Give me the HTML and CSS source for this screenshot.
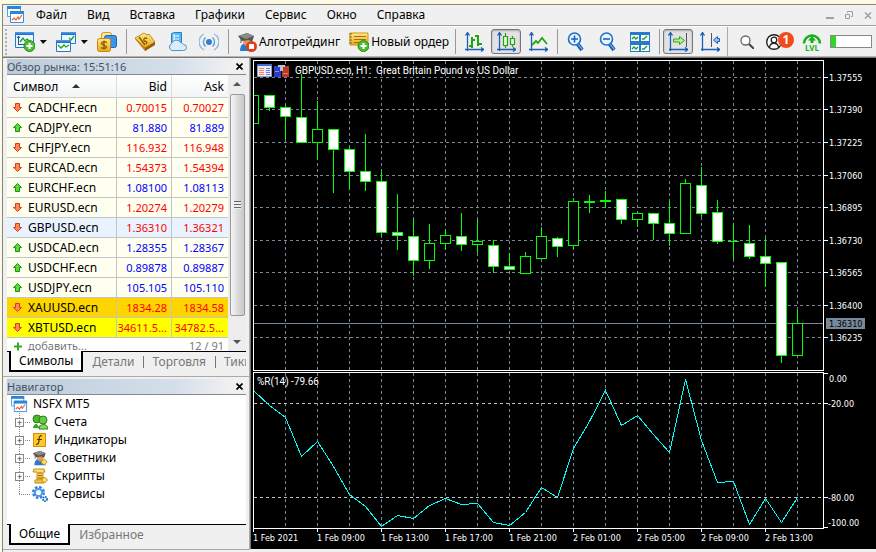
FILE: index.html
```html
<!DOCTYPE html>
<html lang="ru">
<head>
<meta charset="utf-8">
<title>NSFX MT5</title>
<link rel="stylesheet" href="styles.css">
</head>
<body>
<svg class="defs" aria-hidden="true">
  <defs>
    <linearGradient id="gold" x1="0" y1="0" x2="0" y2="1"><stop offset="0" stop-color="#ffe98a"/><stop offset="1" stop-color="#e9a912"/></linearGradient>
    <linearGradient id="head" x1="0" y1="0" x2="0" y2="1"><stop offset="0" stop-color="#4da3f0"/><stop offset="1" stop-color="#1c66c4"/></linearGradient>
    <symbol id="logo" viewBox="0 0 18 18"><path d="M.5.5h13v10H.5z" fill="#fff" stroke="#56a2e0"/><path d="M0 0h14v3H0z" fill="#2a86dd"/><path d="M3.500 5.500h13v11h-13z" fill="#fff" stroke="#3b8ee0"/><path d="M3 5h14v3H3z" fill="#2a86dd"/><path d="M5 14l2-2 2 2 2-3 1 2 3-4" fill="none" stroke="#e8622c" stroke-width="1.200"/></symbol>
    <symbol id="up" viewBox="0 0 9 9"><path d="M4.500.500L8.500 4.500H6.500V8.500H2.500V4.500H.500z" fill="#5fd63a" stroke="#179014"/></symbol>
    <symbol id="down" viewBox="0 0 9 9"><path d="M4.500 8.500L8.500 4.500H6.500V.500H2.500V4.500H.500z" fill="#ff8a55" stroke="#d8371b"/></symbol>
    <symbol id="trader" viewBox="0 0 20 20"><path d="M3 19c0-6 3-8 7-8s6 3 7 8z" fill="#2a78d0"/><path d="M6 7h8v3c0 3-2 4-4 4s-4-2-4-5z" fill="#e29a52"/><path d="M1 4l9-3 7 3-2 6-3-2-7 1z" fill="#555"/><path d="M2 4l8-3 7 3-8 3z" fill="#8b8b8b"/><path d="M4 5v6" stroke="#555"/></symbol>
  </defs>
</svg>
<div class="app">
  <header class="menubar">
    <svg class="logo" aria-hidden="true"><use href="#logo"/></svg>
    <nav class="menus">
      <a href="#">Файл</a><a href="#">Вид</a><a href="#">Вставка</a><a href="#">Графики</a><a href="#">Сервис</a><a href="#">Окно</a><a href="#">Справка</a>
    </nav>
    <div class="winbuttons">
      <button aria-label="Свернуть"><svg viewBox="0 0 8 8"><path d="M0 6h8v2H0z" fill="#a0a0a0"/></svg></button>
      <button aria-label="Восстановить"><svg viewBox="0 0 8 8"><path d="M.500 3.500h4v4h-4zM2.500 2V.500h5v5H6" fill="none" stroke="#a0a0a0"/></svg></button>
      <button aria-label="Закрыть"><svg viewBox="0 0 8 8"><path d="M1 1.500l6 6M7 1.500l-6 6" stroke="#a0a0a0" stroke-width="1.600"/></svg></button>
    </div>
  </header>

  <div class="toolbar">
    <span class="grip"></span>
    <button class="tool drop" aria-label="Новый график"><svg class="icon" viewBox="0 0 20 20"><path d="M.500 1.500h18v14H.500z" fill="#eaf6ff" stroke="#2a78cc"/><path d="M0 0h19v3H0z" fill="url(#head)"/><path d="M3.500 4v9M3 12.500h11M2 6l1.500-2L5 6" fill="none" stroke="#1c5a9e"/><path d="M5 10l3-4 2 3 2-2 4 3" fill="none" stroke="#22a018" stroke-width="1.300"/><circle cx="14.500" cy="14" r="5.500" fill="#4cbd2f" stroke="#2a8b1b"/><path d="M11.500 14h6M14.500 11v6" stroke="#fff" stroke-width="2"/></svg><i class="caret"></i></button>
    <button class="tool drop" aria-label="Профили"><svg class="icon" viewBox="0 0 20 20"><path d="M5.500 1.500h14v10h-14z" fill="#eaf6ff" stroke="#2a78cc"/><path d="M5 0h15v3H5z" fill="url(#head)"/><path d="M13 6l2 2 3-4" fill="none" stroke="#22a018" stroke-width="1.300"/><path d="M.500 8.500h14v11H.500z" fill="#f4fbff" stroke="#2a78cc"/><path d="M0 8h15v3H0z" fill="url(#head)"/><path d="M2 13l3 3 3-3 2 2 3-2" fill="none" stroke="#22a018" stroke-width="1.300"/></svg><i class="caret"></i></button>
    <button class="tool" aria-label="Обзор рынка"><svg class="icon" viewBox="0 0 20 20"><rect x="4.500" y=".500" width="10" height="13" rx="2" fill="#ffe59a" stroke="#d49b18"/><rect x="7.500" y="3.500" width="12" height="12" rx="2" fill="#3a96e8" stroke="#1b62b3"/><rect x=".500" y="6.500" width="13" height="13" rx="2" fill="url(#gold)" stroke="#c88610"/><path d="M10 10.500C9 9.500 4.500 9.500 4.500 11.500S9.500 13 9.500 15 5 16.500 4 15.500M7 8.500v9" fill="none" stroke="#8a5500" stroke-width="1.200"/></svg></button>
    <span class="sep"></span>
    <button class="tool" aria-label="Маркет"><svg class="icon" viewBox="0 0 20 20"><path d="M0 7L13 2l7 9-10 8z" fill="#c57e12"/><path d="M0 6l9-5 3 2 2-1 6 8-10 6z" fill="url(#gold)" stroke="#b97a10" stroke-width=".800"/><path d="M4 5l6 8M9 9c-1-3 2-4 3-2M9 9c2 0 4 1 2 3" fill="none" stroke="#8f5400" stroke-width="1.300"/><path d="M10 16l10-6v3l-10 6z" fill="#9a5a10"/></svg></button>
    <button class="tool" aria-label="VPS"><svg class="icon" viewBox="0 0 20 20"><path d="M4.500 1.500l3-1h7v12h-10z" fill="#64b8f2" stroke="#1b82cf"/><path d="M7 4h5M7 7h5M7 2v8" stroke="#fff"/><path d="M4.500 18.500a4 4 0 0 1 0-7 5 5 0 0 1 9-1 3.500 3.500 0 0 1 3 2 3 3 0 0 1 0 6z" fill="#d9edfb" stroke="#5a8fc8"/></svg></button>
    <button class="tool" aria-label="Сигналы"><svg class="icon" viewBox="0 0 20 20"><circle cx="10" cy="10" r="3" fill="#2f7fd0"/><g fill="none" stroke="#5d9bda" stroke-width="1.400"><path d="M6.500 5.500a6 6 0 0 0 0 9M13.500 5.500a6 6 0 0 1 0 9"/><path d="M5 2a9 9 0 0 0 0 16M15 2a9 9 0 0 1 0 16" stroke="#8bb8e3"/></g></svg></button>
    <span class="sep"></span>
    <button class="tool named"><svg class="icon" viewBox="0 0 20 20"><use href="#trader" width="20" height="20"/><circle cx="14.500" cy="14.500" r="5.500" fill="#e33a1c"/><path d="M12 12h5v5h-5z" fill="#fff"/></svg>Алготрейдинг</button>
    <button class="tool named"><svg class="icon" viewBox="0 0 20 20"><path d="M1 1h18v12H1z" fill="url(#gold)" stroke="#cf9318"/><path d="M0 2h3M0 5h3M0 8h3M0 11h3" stroke="#8b6a20"/><path d="M5 4.500h12M5 7.500h12M5 10.500h6" stroke="#a76d10"/><circle cx="14.500" cy="14" r="5.500" fill="#4cbd2f" stroke="#2a8b1b"/><path d="M11.500 14h6M14.500 11v6" stroke="#fff" stroke-width="2"/></svg>Новый ордер</button>
    <span class="sep"></span>
    <button class="tool" aria-label="Бары"><svg class="icon" viewBox="0 0 20 20"><path d="M3.500 1v18M1 17.500h18M1.500 3.500l2-3 2 3M17 15.500l3 2-3 2" fill="none" stroke="#1c5fb8" stroke-width="1.300"/><path d="M8 5v11M5 14h3M8 8h3M14 3v11M11 4h3M14 12h4" stroke="#22a30f" stroke-width="2" fill="none"/></svg></button>
    <button class="tool pressed" aria-label="Свечи"><svg class="icon" viewBox="0 0 20 20"><path d="M3.500 1v18M1 17.500h18M1.500 3.500l2-3 2 3M17 15.500l3 2-3 2" fill="none" stroke="#1c5fb8" stroke-width="1.300"/><path d="M7.500 4.500h4v9h-4zM9.500 1v3M9.500 14v2M14.500 6.500h4v6h-4zM16.500 4v2M16.500 13v2" stroke="#22a30f" fill="#eaf8e4" stroke-width="1.200"/></svg></button>
    <button class="tool" aria-label="Линия"><svg class="icon" viewBox="0 0 20 20"><path d="M3.500 1v18M1 17.500h18M1.500 3.500l2-3 2 3M17 15.500l3 2-3 2" fill="none" stroke="#1c5fb8" stroke-width="1.300"/><path d="M4 13l4-4 2 2 4-5 5 6" stroke="#22a30f" fill="none" stroke-width="1.800"/></svg></button>
    <span class="sep"></span>
    <button class="tool" aria-label="Увеличить"><svg class="icon" viewBox="0 0 20 20"><path d="M11 11l5 7" stroke="#1c66be" stroke-width="4"/><path d="M12 12l4 5" stroke="#8cc6f5"/><circle cx="8.500" cy="7" r="6" fill="#e8f6ff" stroke="#1f6fc8" stroke-width="1.600"/><path d="M5 7h7M8.500 3.500v7" stroke="#1c5fb8" stroke-width="1.600"/></svg></button>
    <button class="tool" aria-label="Уменьшить"><svg class="icon" viewBox="0 0 20 20"><path d="M11 11l5 7" stroke="#1c66be" stroke-width="4"/><path d="M12 12l4 5" stroke="#8cc6f5"/><circle cx="8.500" cy="7" r="6" fill="#e8f6ff" stroke="#1f6fc8" stroke-width="1.600"/><path d="M5 7h7" stroke="#1c5fb8" stroke-width="1.600"/></svg></button>
    <button class="tool" aria-label="Упорядочить окна"><svg class="icon" viewBox="0 0 20 20"><path d="M0 0h20v20H0z" fill="#2a78cc"/><path d="M1 3h8v6H1zM11 3h8v6h-8zM1 13h8v6H1zM11 13h8v6h-8z" fill="#f2faff"/><path d="M2 7l2-2 2 2 2-2M12 7h2l3-3M2 17l2-2 2 2 2-2M12 17h2l3-3" fill="none" stroke="#22a018" stroke-width="1.300"/></svg></button>
    <span class="sep"></span>
    <button class="tool pressed" aria-label="Автопрокрутка"><svg class="icon" viewBox="0 0 20 20"><path d="M2.500 1v18M1 17.500h18M.500 3.500l2-3 2 3M17 15.500l3 2-3 2" fill="none" stroke="#1c5fb8" stroke-width="1.300"/><path d="M18.500 1v14" stroke="#555"/><path d="M5.500 7h6V4.500l5 4-5 4V10h-6z" fill="#b9ec9d" stroke="#38a51e"/></svg></button>
    <button class="tool" aria-label="Сдвиг графика"><svg class="icon" viewBox="0 0 20 20"><path d="M2.500 1v18M1 17.500h18M.500 3.500l2-3 2 3M17 15.500l3 2-3 2" fill="none" stroke="#1c5fb8" stroke-width="1.300"/><path d="M11.500 1v14" stroke="#555"/><path d="M19.500 6.500h-2V4.500l-4 3.500 4 3.500v-2h2z" fill="#8cc6f5" stroke="#1c5fb8"/></svg></button>
    <div class="status">
      <button class="plain" aria-label="Поиск"><svg viewBox="0 0 14 14"><circle cx="5.500" cy="5.500" r="4.500" fill="#fff" stroke="#666" stroke-width="1.300"/><path d="M9 9l5 5" stroke="#444" stroke-width="2"/></svg></button>
      <button class="plain account" aria-label="Уведомления"><svg viewBox="0 0 16 16"><circle cx="8" cy="8" r="7.300" fill="#fff" stroke="#222" stroke-width="1.400"/><circle cx="8" cy="6" r="2.800" fill="none" stroke="#222" stroke-width="1.300"/><path d="M3.500 13c1-5 8-5 9 0" fill="none" stroke="#222" stroke-width="1.300"/></svg><b class="badge">1</b></button>
      <div class="level"><svg viewBox="0 0 20 12"><path d="M2 11.500a8 8 0 1 1 16 0" fill="none" stroke="#16b01c" stroke-width="2.600"/><path d="M10 4l4 4.500h-2.500V11h-3V8.500H6z" fill="#16b01c"/></svg><span>LVL</span></div>
      <div class="meter"><span></span></div>
    </div>
  </div>

  <div class="workspace">
    <aside class="sidebar">
      <section class="panel">
        <div class="caption"><h2>Обзор рынка: 15:51:16</h2><button aria-label="Закрыть обзор рынка"><svg viewBox="0 0 7 7"><path d="M.500.500l6 6M6.500.500l-6 6" stroke="#000" stroke-width="1.700"/></svg></button></div>
        <div class="market">
          <table>
            <thead><tr><th scope="col">Символ<i class="sort"></i></th><th scope="col">Bid</th><th scope="col">Ask</th></tr></thead>
            <tbody>
              <tr class="down"><td><svg><use href="#down"/></svg>CADCHF.ecn</td><td>0.70015</td><td>0.70027</td></tr>
              <tr><td><svg><use href="#up"/></svg>CADJPY.ecn</td><td>81.880</td><td>81.889</td></tr>
              <tr class="down"><td><svg><use href="#down"/></svg>CHFJPY.ecn</td><td>116.932</td><td>116.948</td></tr>
              <tr class="down"><td><svg><use href="#down"/></svg>EURCAD.ecn</td><td>1.54373</td><td>1.54394</td></tr>
              <tr><td><svg><use href="#up"/></svg>EURCHF.ecn</td><td>1.08100</td><td>1.08113</td></tr>
              <tr class="down"><td><svg><use href="#down"/></svg>EURUSD.ecn</td><td>1.20274</td><td>1.20279</td></tr>
              <tr class="down selected"><td><svg><use href="#down"/></svg>GBPUSD.ecn</td><td>1.36310</td><td>1.36321</td></tr>
              <tr><td><svg><use href="#up"/></svg>USDCAD.ecn</td><td>1.28355</td><td>1.28367</td></tr>
              <tr><td><svg><use href="#up"/></svg>USDCHF.ecn</td><td>0.89878</td><td>0.89887</td></tr>
              <tr><td><svg><use href="#up"/></svg>USDJPY.ecn</td><td>105.105</td><td>105.110</td></tr>
              <tr class="down gold"><td><svg><use href="#down"/></svg>XAUUSD.ecn</td><td>1834.28</td><td>1834.58</td></tr>
              <tr class="down yellow"><td><svg><use href="#down"/></svg>XBTUSD.ecn</td><td>34611.5...</td><td>34782.5...</td></tr>
              <tr class="add"><td><svg viewBox="0 0 9 9"><path d="M1 4.500h8M5 .500v8" stroke="#2fae24" stroke-width="2"/></svg>добавить...</td><td colspan="2">12 / 91</td></tr>
            </tbody>
          </table>
          <div class="scroll"><i class="arrow-up"></i><span class="thumb"><i></i></span><i class="arrow-down"></i></div>
        </div>
        <div class="tabs"><button class="active">Символы</button><button>Детали</button><button>Торговля</button><button>Тики</button></div>
      </section>

      <section class="panel navigator">
        <div class="caption"><h2>Навигатор</h2><button aria-label="Закрыть навигатор"><svg viewBox="0 0 7 7"><path d="M.500.500l6 6M6.500.500l-6 6" stroke="#000" stroke-width="1.700"/></svg></button></div>
        <div class="tree">
          <div class="root"><svg aria-hidden="true"><use href="#logo"/></svg>NSFX MT5</div>
          <ul>
            <li><button aria-label="Развернуть Счета">+</button><svg viewBox="0 0 16 16"><circle cx="5" cy="5" r="4" fill="#4db52a" stroke="#24801a"/><circle cx="11" cy="6" r="4" fill="#6bcb40" stroke="#24801a"/><path d="M1 14c0-5 8-6 8 0z" fill="#39a323"/><path d="M7 15c0-6 9-6 9 0z" fill="#8adb5c" stroke="#24801a"/><path d="M4 9l3 4 1-3" fill="#fff"/></svg>Счета</li>
            <li><button aria-label="Развернуть Индикаторы">+</button><svg viewBox="0 0 16 16"><rect x="1.500" y="1.500" width="12" height="13" fill="#ffc928" stroke="#d08e0a"/><path d="M10 4c-2-1-3 1-3 4s-1 5-3 4M5 7.500h5" fill="none" stroke="#553300" stroke-width="1.200"/></svg>Индикаторы</li>
            <li><button aria-label="Развернуть Советники">+</button><svg viewBox="0 0 20 20"><use href="#trader" width="20" height="20"/><path d="M15 11l4 4-4 4-4-4z" fill="#ffd95a" stroke="#b8860b"/></svg>Советники</li>
            <li><button aria-label="Развернуть Скрипты">+</button><svg viewBox="0 0 16 16"><path d="M2 1h10l1 3h-2v10H5V4H1z" fill="url(#gold)" stroke="#c88a10"/><path d="M3 12h9v3H3z" fill="url(#gold)" stroke="#c88a10"/><path d="M6 5h4M6 7.500h4M6 10h4" stroke="#a76d10"/><path d="M12.500 9l3 3-3 3-3-3z" fill="#ffe070" stroke="#b8860b"/></svg>Скрипты</li>
            <li><svg viewBox="0 0 16 16"><circle cx="6.500" cy="6.500" r="5.200" fill="none" stroke="#2f7fd8" stroke-width="2.600" stroke-dasharray="2.500 1.580"/><circle cx="6.500" cy="6.500" r="3.600" fill="#fff" stroke="#4d9ae8" stroke-width="2"/><circle cx="13" cy="13" r="2" fill="#fff" stroke="#2a72c8" stroke-width="2" stroke-dasharray="1.500 .600"/></svg>Сервисы</li>
          </ul>
        </div>
        <div class="tabs"><button class="active">Общие</button><button>Избранное</button></div>
      </section>
    </aside>

    <main class="chart">
      <svg id="chart" viewBox="251 58 625 491" role="img" aria-label="GBPUSD.ecn, H1">
        <g id="grid" class="grid"></g>
        <g id="levels" class="levels"></g>
        <path class="bid" d="M254 323.500H823"/>
        <g id="candles" class="candles"></g>
        <polyline id="range" class="range"/>
        <g id="axes" class="axes"><path d="M253.500 60.500H823.500V370.500H253.500zM253.500 372.500H823.500V528.500H253.500z"/></g>
        <g class="badges">
          <path d="M257.500 64.500h14v12h-14z" fill="#f3e9ef" stroke="#8ba0c8"/><path d="M257 64h15v2h-15z" fill="#3d72cf"/><path d="M259 68h5M259 70h5M259 72h5M259 74h5" stroke="#ef8078"/><path d="M266 68h4M266 70h4M266 72h4M266 74h4" stroke="#6080e8"/>
          <path d="M274 66h7v11h-7z" fill="#263fd0"/><path d="M282 66h7v11h-7z" fill="#bd3726"/><path d="M278 65h7v2h-2v4h-3v-4h-2z" fill="#bdc3cc"/><path d="M275 71h4M283 73h5" stroke="#e27b68"/>
        </g>
        <text class="title" x="295" y="74" xml:space="preserve">GBPUSD.ecn, H1:  Great Britain Pound vs US Dollar</text>
        <text class="title" x="257" y="385">%R(14) -79.66</text>
        <g id="labels"></g>
        <path class="tag" d="M826 318h39v11h-39z"/>
        <text class="tag-text" x="829" y="327">1.36310</text>
      </svg>
    </main>
  </div>
</div>
<script src="chart.js"></script>
</body>
</html>
```
FILE: styles.css
```css
* { box-sizing: border-box; }
body {
  margin: 0;
  background: #fdfae4;
  color: #000;
  font: 12px/18px "Noto Sans", "Open Sans", sans-serif;
}
button {
  margin: 0;
  padding: 0;
  border: 0;
  background: none;
  color: inherit;
  font: inherit;
}
svg { display: block; flex: none; }
.defs { position: absolute; width: 0; height: 0; }
.app {
  margin: 4px 0 0 2px;
  border-top: 1px solid #858585;
  border-left: 1px solid #858585;
  background: #f0f0f0;
  min-height: calc(100vh - 4px);
}

.menubar {
  display: flex;
  align-items: center;
  height: 21px;
  padding: 0 4px;
  border-bottom: 1px solid #a0a0a0;
}
.logo { width: 18px; height: 18px; }
.menus { display: flex; gap: 20px; margin-left: 11px; }
.menus a { color: #000; text-decoration: none; }
.winbuttons { display: flex; gap: 11px; margin-left: auto; }
.winbuttons svg { width: 8px; height: 8px; }

.toolbar {
  display: flex;
  align-items: center;
  height: 31px;
  padding-right: 4px;
  border-top: 1px solid #fff;
  border-bottom: 1px solid #b4b4b4;
}
.toolbar > * { flex: none; }
.grip {
  width: 2px;
  height: 26px;
  margin: 0 2px;
  background: repeating-linear-gradient(#b0b0b0 0 2px, #f0f0f0 2px 4px);
}
.tool {
  display: flex;
  align-items: center;
  gap: 3px;
  height: 25px;
  padding: 0 6px;
  white-space: nowrap;
}
.icon { width: 20px; height: 20px; }
.drop { gap: 5px; padding-right: 3px; }
.named { gap: 2px; padding-right: 3px; }
.pressed {
  margin: 0 1px;
  padding: 0 4px;
  border: 1px solid #777;
  border-radius: 3px;
  background: #e2e2e2;
  box-shadow: inset 0 1px 2px #aaa;
}
.caret { border: 4px solid transparent; border-top-color: #111; border-bottom: 0; }
.drop .caret { border-left-width: 3px; border-right-width: 4px; }
.sep { width: 1px; height: 25px; margin: 0 2px 0 3px; background: #999; }
.status {
  display: flex;
  align-items: center;
  gap: 8px;
  height: 30px;
  margin-left: auto;
  padding-left: 12px;
  border-left: 1px solid #aaa;
}
.plain svg { width: 14px; height: 14px; }
.account { position: relative; width: 28px; margin-left: 4px; }
.account svg { width: 16px; height: 16px; }
.badge {
  position: absolute;
  top: -2px;
  right: 0;
  width: 16px;
  border-radius: 8px;
  background: #f04a1d;
  color: #fff;
  font-size: 12px;
  line-height: 16px;
}
.level { width: 20px; color: #16b01c; font-size: 8px; line-height: 7px; text-align: center; font-weight: bold; }
.level svg { width: 20px; height: 12px; }
.meter { width: 42px; height: 13px; border: 1px solid #888; background: #fff; }
.meter span { display: block; width: 5px; height: 11px; background: #32d62b; }

.workspace { display: flex; align-items: flex-start; border-top: 1px solid #777; }
.sidebar { flex: none; width: 247px; padding-top: 1px; border-right: 1px solid #aaa; }
.panel { padding: 0 3px 4px 4px; border-bottom: 1px solid #aaa; }
.navigator { padding-top: 2px; }
.caption {
  display: flex;
  align-items: center;
  justify-content: space-between;
  height: 15px;
  padding-right: 3px;
  background: linear-gradient(90deg, #bccbdb, #d4dfea 70%, #f0f0f0 94%);
}
.caption h2 { margin: 0; color: #44515e; font-size: 11px; font-weight: normal; line-height: 15px; }
.caption svg { width: 7px; height: 7px; }

.market {
  display: flex;
  height: 278px;
  overflow: hidden;
  border-top: 1px solid #888;
  border-bottom: 1px solid #000;
  background: #fff;
}
table { flex: 1; border-collapse: separate; border-spacing: 0; table-layout: fixed; width: 0; }
th, td { height: 20px; padding: 0 4px 0 0; text-align: right; line-height: 19px; white-space: nowrap; font-weight: normal; }
th { height: 23px; border-right: 1px solid #ddd; border-bottom: 1px solid #ccc; background: linear-gradient(#fff, #f3f4f6); }
th:first-child { width: 110px; padding-left: 6px; text-align: left; }
th:nth-child(2) { width: 55px; }
td { border-right: 1px solid #c4c4c4; border-bottom: 1px solid #c4c4c4; background: #fffff0; color: #00f; font-size: 11px; }
td:last-child, th:last-child { border-right: 0; }
td:first-child { padding-left: 21px; text-align: left; color: #000; font-size: 12px; }
td svg { float: left; width: 9px; height: 9px; margin: 5px 0 0 -15px; }
.down td:nth-child(n+2) { color: #f00; }
.selected td { background: #e8f3ff; }
.gold td { background: #ffd500; }
.yellow td { background: #ff0; }
.add td, .add td:first-child { height: 15px; border: 0; background: #fff; color: #777; font-size: 11px; line-height: 15px; vertical-align: top; }
.add td svg { margin-top: 4px; }
.sort { display: inline-block; margin: 0 0 3px 14px; border: 4px solid transparent; border-bottom: 4px solid #333; border-top: 0; }

.scroll { display: flex; flex-direction: column; align-items: center; width: 18px; background: #ededed; }
.arrow-up { margin: 7px 0 8px; border: 4px solid transparent; border-top: 0; border-bottom-color: #555; }
.arrow-down { margin: auto 0 7px; border: 4px solid transparent; border-bottom: 0; border-top-color: #555; }
.thumb {
  display: grid;
  place-items: center;
  width: 15px;
  height: 222px;
  border: 1px solid #999;
  border-radius: 2px;
  background: linear-gradient(90deg, #f5f5f5, #dcdcdc 50%, #c8c8c8);
}
.thumb i { width: 7px; height: 8px; background: repeating-linear-gradient(#666 0 1px, #eee 1px 3px); }

.tabs { display: flex; height: 20px; overflow-x: clip; color: #777; padding-left: 2px; }
.tabs button { flex: none; height: 20px; padding: 0 9px; line-height: 20px; }
.tabs button + button + button { background: linear-gradient(#777, #777) 0 4px / 1px 12px no-repeat; }
.tabs .active {
  position: relative;
  margin-top: -1px;
  height: 21px;
  border: 2px solid #000;
  border-top: 0;
  background: #fff;
  padding: 0 8px;
  color: #000;
}

.tree { height: 131px; border-top: 1px solid #888; border-bottom: 1px solid #000; background: #fff; }
.root { display: flex; align-items: center; gap: 5px; height: 18px; padding-left: 4px; }
.root svg { width: 17px; height: 17px; }
.tree ul {
  margin: 0 0 0 12px;
  padding: 0;
  list-style: none;
  background: linear-gradient(#fff, #fff) 0 81px / 1px 20px no-repeat, repeating-linear-gradient(#888 0 1px, #fff 1px 2px) 0 0 / 1px 100% no-repeat;
}
.tree li {
  display: flex;
  align-items: center;
  gap: 6px;
  height: 18px;
  padding-left: 13px;
  background: repeating-linear-gradient(90deg, #888 0 1px, transparent 1px 2px) 0 9px / 12px 1px no-repeat;
}
.tree li svg { width: 16px; height: 16px; }
.tree li button {
  width: 9px;
  height: 9px;
  margin: 0 -2px 0 -17px;
  border: 1px solid #888;
  background: #fff;
  color: #234;
  font-size: 9px;
  line-height: 7px;
}
.tree li button + svg { margin-left: 4px; }

.chart { flex: 1; min-width: 0; margin-bottom: 2px; border-left: 1px solid #777; background: #000; }
#chart { width: 100%; height: auto; shape-rendering: crispEdges; font: 9px "DejaVu Sans Condensed", "Noto Sans", sans-serif; }
#chart text { fill: #fff; }
#chart .title { font: 10px Roboto, sans-serif; }
#chart .tag-text { fill: #000; }
.tag { fill: #778899; }
.grid { fill: none; stroke: #778899; stroke-dasharray: 3 3; }
.levels { fill: none; stroke: #c0c0c0; stroke-dasharray: 3 3; }
.bid { stroke: #778899; }
.candles { stroke: #0f0; }
.candles .bear { fill: #fff; }
.candles .bull { fill: #000; }
.range { fill: none; stroke: #0ff; }
.axes { fill: none; stroke: #fff; }
```
FILE: chart.js
```js
const NS = 'http://www.w3.org/2000/svg';
const START = 253, STEP = 16;

// [type, body top, body bottom, wick top, wick bottom]
const candles = [
  ['bull', 95, 124, 95, 124], ['bear', 95, 108, 95, 111], ['bear', 107, 117, 105, 139],
  ['bear', 117, 143, 74, 143], ['bull', 129, 143, 101, 159], ['bear', 129, 150, 129, 193],
  ['bear', 149, 172, 147, 190], ['bear', 171, 182, 134, 191], ['bear', 181, 233, 171, 235],
  ['bear', 232, 236, 194, 250], ['bear', 236, 261, 219, 276], ['bull', 243, 261, 224, 269],
  ['bull', 235, 244, 229, 250], ['bear', 236, 245, 213, 251], ['bull', 241, 245, 220, 253],
  ['bear', 245, 267, 240, 273], ['bear', 266, 270, 253, 270], ['bull', 256, 274, 252, 274],
  ['bull', 236, 259, 227, 259], ['bear', 238, 247, 237, 257], ['bull', 201, 246, 198, 249],
  ['bull', 201, 203, 195, 213], ['bull', 200, 202, 191, 208], ['bear', 199, 220, 199, 224],
  ['bull', 213, 220, 213, 227], ['bear', 213, 224, 213, 240], ['bear', 223, 234, 201, 246],
  ['bull', 183, 234, 179, 234], ['bear', 185, 214, 167, 217], ['bear', 212, 242, 200, 244],
  ['bull', 241, 242, 223, 259], ['bear', 243, 257, 225, 259], ['bear', 256, 264, 238, 287],
  ['bear', 262, 356, 262, 363], ['bull', 323, 356, 310, 356]
];
const range = [390, 405, 417, 456, 441, 466, 494, 506, 526, 515, 518, 505, 498, 504, 503, 522, 525, 512,
  487, 497, 448, 421, 390, 425, 415, 434, 452, 379, 440, 482, 481, 524, 498, 522, 497];
const prices = [[77, '1.37555'], [109, '1.37390'], [142, '1.37225'], [175, '1.37060'], [207, '1.36895'],
  [240, '1.36730'], [272, '1.36565'], [305, '1.36400'], [337, '1.36235']];
const times = ['1 Feb 2021', '1 Feb 09:00', '1 Feb 13:00', '1 Feb 17:00', '1 Feb 21:00',
  '2 Feb 01:00', '2 Feb 05:00', '2 Feb 09:00', '2 Feb 13:00'];

function add(parent, name, attrs, text) {
  const node = document.createElementNS(NS, name);
  for (const key in attrs) node.setAttribute(key, attrs[key]);
  if (text) node.textContent = text;
  document.getElementById(parent).append(node);
}
const line = (parent, d) => add(parent, 'path', { d });
const label = (x, y, text) => add('labels', 'text', { x, y }, text);

for (let x = START + 32; x <= 797; x += 32) {
  line('grid', `M${x + 0.5} 61V370`);
  line('grid', `M${x + 0.5} 373V528`);
}
for (const [y, text] of prices) {
  line('grid', `M254 ${y + 0.5}H823`);
  line('axes', `M824 ${y + 0.5}h4`);
  label(829, y + 4, text);
}
for (const y of [403, 497]) line('levels', `M254 ${y + 0.5}H823`);
for (const y of [373, 403, 497, 527]) line('axes', `M824 ${y + 0.5}h4`);
label(829, 382, '0.00');
label(828, 407, '-20.00');
label(828, 501, '-80.00');
label(828, 526, '-100.00');
times.forEach((text, i) => {
  const x = START + i * 64;
  line('axes', `M${x + 0.5} 529v3`);
  label(x, 541, text);
});
candles.forEach(([type, top, bottom, high, low], i) => {
  const x = START + i * STEP;
  line('candles', `M${x + 0.5} ${high}V${low}`);
  const left = Math.max(x - 5, START);
  add('candles', 'rect', { class: type, x: left + 0.5, y: top + 0.5, width: x + 5 - left, height: Math.max(bottom - top - 1, 0.01) });
});
document.getElementById('range').setAttribute('points',
  range.map((y, i) => `${START + i * STEP + 0.5},${y + 0.5}`).join(' '));
```
